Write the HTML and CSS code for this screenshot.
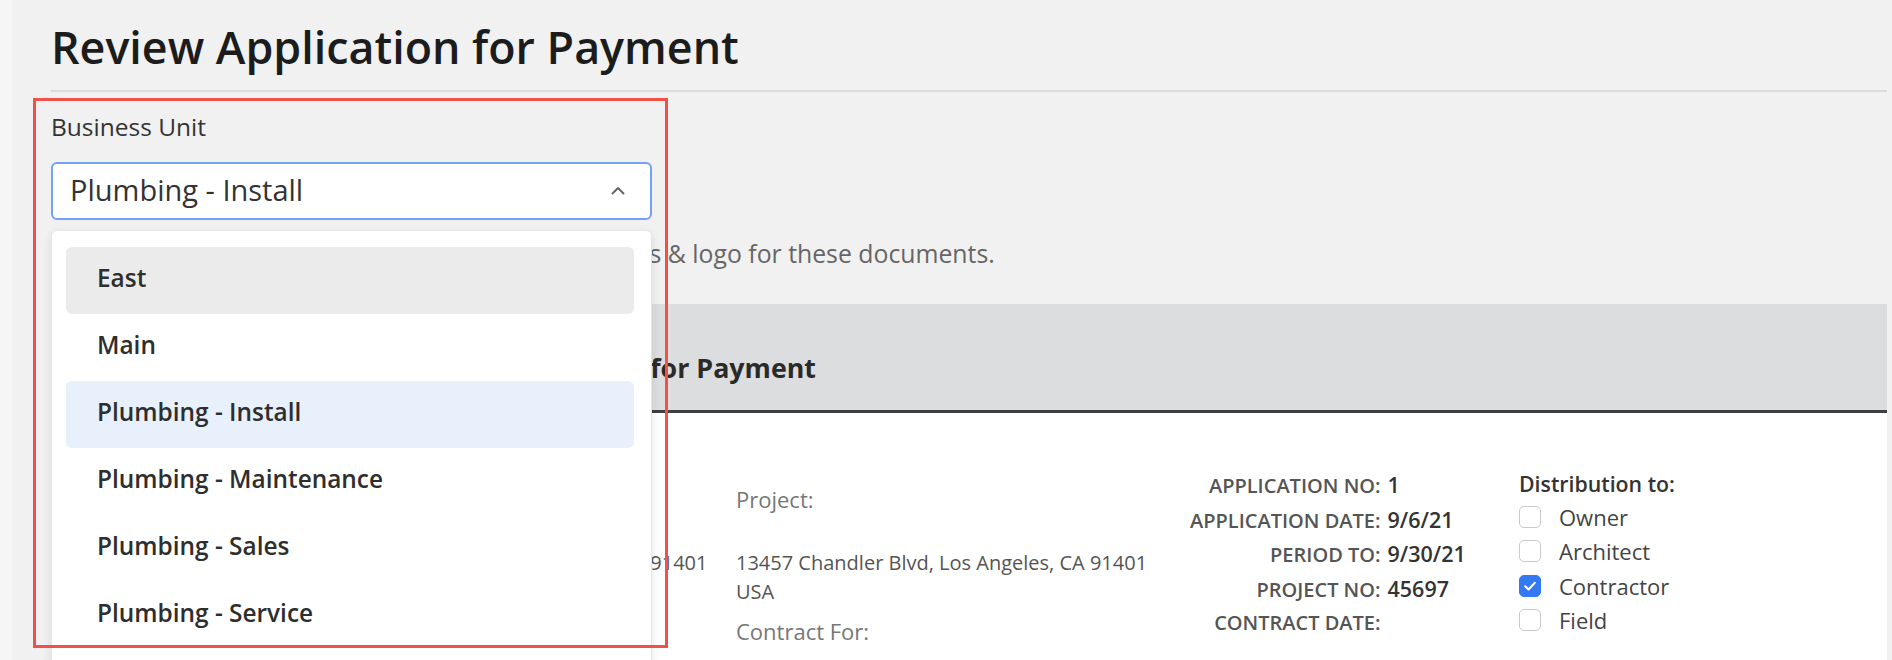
FILE: index.html
```html
<!DOCTYPE html>
<html lang="en">
<head>
<meta charset="utf-8">
<title>Review Application for Payment</title>
<link rel="stylesheet" href="styles.css">
</head>
<body>
<div class="app">
  <div class="edge"></div>
  <main class="main">
    <h1 class="title">Review Application for Payment</h1>
    <div class="rule"></div>

    <section class="bu">
      <label class="bu-label">Business Unit</label>
      <div class="select">
        <span class="select-value">Plumbing - Install</span>
        <svg class="chev" viewBox="0 0 14 9" aria-hidden="true"><path d="M1.5 7.5 L7 2 L12.5 7.5"/></svg>
      </div>
      <p class="desc">The business unit you choose will decide the address &amp; logo for these documents.</p>
    </section>

    <section class="card">
      <div class="band"><h2 class="band-title">Application and Certificate for Payment</h2></div>
      <div class="card-body">
        <div class="col col-to">
          <div class="k">To Owner:</div>
          <div class="addr">5400 Van Nuys Blvd, Van Nuys, CA 91401</div>
        </div>
        <div class="col col-project">
          <div class="k">Project:</div>
          <div class="addr">13457 Chandler Blvd, Los Angeles, CA 91401<br>USA</div>
          <div class="k k-gap">Contract For:</div>
        </div>
        <div class="col col-info">
          <div class="info-grid">
            <span class="lbl">APPLICATION NO:</span><span class="val">1</span>
            <span class="lbl">APPLICATION DATE:</span><span class="val">9/6/21</span>
            <span class="lbl">PERIOD TO:</span><span class="val">9/30/21</span>
            <span class="lbl">PROJECT NO:</span><span class="val">45697</span>
            <span class="lbl">CONTRACT DATE:</span><span class="val"></span>
          </div>
        </div>
        <div class="col col-dist">
          <div class="dist-title">Distribution to:</div>
          <div class="cb-row"><span class="cb"></span><span>Owner</span></div>
          <div class="cb-row"><span class="cb"></span><span>Architect</span></div>
          <div class="cb-row"><span class="cb cb-on"><svg viewBox="0 0 21 21" aria-hidden="true"><path d="M5.5 10.8 L9 14.2 L15.5 7.2"/></svg></span><span>Contractor</span></div>
          <div class="cb-row"><span class="cb"></span><span>Field</span></div>
        </div>
      </div>
    </section>

    <ul class="menu">
      <li class="item item-hover">East</li>
      <li class="item">Main</li>
      <li class="item item-selected">Plumbing - Install</li>
      <li class="item">Plumbing - Maintenance</li>
      <li class="item">Plumbing - Sales</li>
      <li class="item">Plumbing - Service</li>
    </ul>

    <div class="annot"></div>
  </main>
</div>
</body>
</html>
```

FILE: styles.css
```css
* { box-sizing: border-box; }
html, body { margin: 0; height: 100%; }
body {
  font-family: "Open Sans", "Liberation Sans", sans-serif;
  color: #333;
  background: #f1f1f1;
  overflow: hidden;
}
.app { display: flex; min-height: 660px; }
.edge { width: 12px; flex: none; background: #f6f6f6; }
.main { flex: 1; position: relative; padding: 19px 5px 0 39px; }

.title {
  margin: 0;
  font-size: 44.8px;
  line-height: 56px;
  font-weight: 600;
  color: #1c1c1c;
}
.rule { height: 2px; background: #dcdcdc; margin-top: 15px; }

.bu { padding-top: 20px; }
.bu-label { display: block; font-size: 24.5px; line-height: 30px; font-weight: 500; color: #333; }
.select {
  margin-top: 20px;
  width: 601px;
  height: 58px;
  border: 2px solid #74a2f0;
  border-radius: 6px;
  background: #fff;
  display: flex;
  align-items: center;
  justify-content: space-between;
  padding: 0 25px 3px 17px;
}
.select-value { font-size: 29px; color: #333; }
.chev { width: 14px; height: 9px; margin-top: 2px; }
.chev path { fill: none; stroke: #666; stroke-width: 2; stroke-linecap: round; stroke-linejoin: round; }
.desc { margin: 17px 0 0; font-size: 24.8px; line-height: 32px; color: #666; }

.card { margin-top: 35px; background: #fff; height: 420px; }
.band {
  height: 109px;
  background: #dcdddf;
  border-bottom: 3px solid #3f3f3f;
  padding: 46px 0 0 234px;
}
.band-title { margin: 0; font-size: 26.8px; line-height: 36px; font-weight: 700; color: #2a2a2a; }

.card-body {
  display: grid;
  grid-template-columns: 408px 454px 329px 1fr;
  padding-left: 277px;
}
.col-to, .col-project { padding-top: 71px; }
.k { font-size: 22px; line-height: 30px; color: #777; }
.addr { margin-top: 34px; font-size: 20px; line-height: 29px; color: #555; }
.k-gap { margin-top: 10px; }

.col-info, .col-dist { padding-top: 55px; }
.info-grid {
  display: grid;
  grid-template-columns: max-content max-content;
  column-gap: 7px;
  grid-auto-rows: 34.5px;
  align-items: baseline;
}
.lbl { text-align: right; font-size: 20px; line-height: 34.5px; font-weight: 600; color: #555; }
.val { font-size: 21.5px; line-height: 34.5px; font-weight: 600; color: #333; }

.dist-title { font-size: 21.3px; line-height: 31.5px; font-weight: 600; color: #333; }
.cb-row {
  display: flex;
  align-items: center;
  gap: 18px;
  height: 34.5px;
  font-size: 22px;
  color: #444;
}
.cb {
  width: 22px;
  height: 22px;
  flex: none;
  border: 1.5px solid #cacaca;
  border-radius: 5px;
  background: #fff;
}
.cb-on { background: #3479f4; border-color: #3479f4; }
.cb-on svg { display: block; width: 100%; height: 100%; }
.cb-on path { fill: none; stroke: #fff; stroke-width: 2.2; stroke-linecap: round; stroke-linejoin: round; }

.menu {
  position: absolute;
  left: 39px;
  top: 230px;
  width: 601px;
  height: 470px;
  margin: 0;
  padding: 16px 17px 0 14px;
  list-style: none;
  background: #fff;
  border: 1px solid #e6e6e6;
  border-radius: 6px;
  box-shadow: 0 3px 10px rgba(0, 0, 0, 0.1);
  z-index: 2;
}
.item {
  height: 67px;
  line-height: 61px;
  padding-left: 31px;
  font-size: 24.4px;
  font-weight: 600;
  color: #2e2e2e;
  border-radius: 6px;
}
.item-hover { background: #ebebeb; }
.item-selected { background: #e8f0fb; }

.annot {
  position: absolute;
  left: 21px;
  top: 98px;
  width: 635px;
  height: 550px;
  border: 3px solid #f0524a;
  z-index: 3;
  pointer-events: none;
}
```
